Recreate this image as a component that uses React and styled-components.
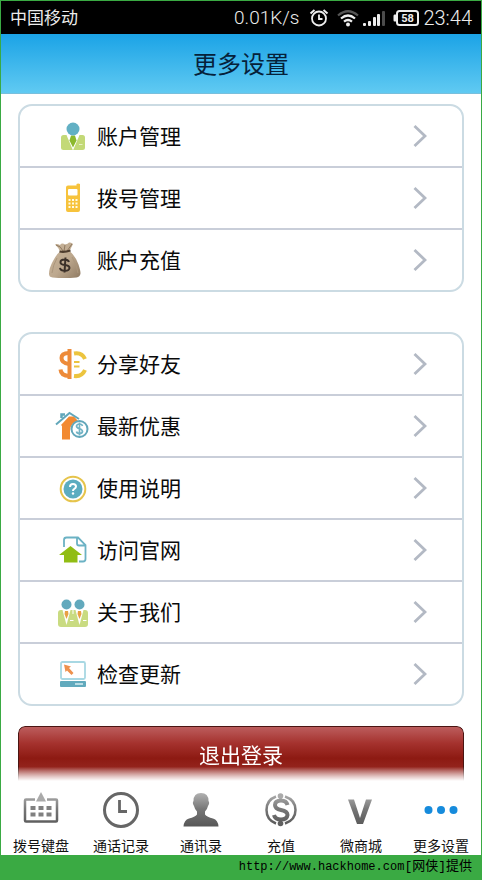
import React from 'react';
import styled, { createGlobalStyle, ThemeProvider } from 'styled-components';

const theme = {
    frame: '#3aaa43',
    line: '#c9ced9',
    edge: '#cbdbe3',
    text: '#0a0a0a',
};

const GlobalStyle = createGlobalStyle`
    * {
        box-sizing: border-box;
    }
    body {
        margin: 0;
        background: #fff;
        font-family: Roboto, 'Noto Sans CJK SC', sans-serif;
    }
`;

const Page = styled.div`
    display: flex;
    flex-direction: column;
    min-height: 100vh;
    background: #fff;
    border: 1px solid ${({ theme }) => theme.frame};
    border-bottom: 0;
`;

const StatusBar = styled.div`
    display: flex;
    align-items: center;
    justify-content: space-between;
    height: 33px;
    padding: 0 9px;
    background: #000;
    color: #ececec;
    font-size: 17px;
    line-height: 24px;
`;

const StatusInfo = styled.div`
    display: flex;
    align-items: center;
    font-weight: 300;
    svg {
        display: block;
    }
`;

const Speed = styled.span`
    margin-right: 10px;
    font-size: 19px;
`;

const Clock = styled.span`
    font-size: 20px;
`;

const StatusIcons = styled.div`
    display: flex;
    align-items: center;
    gap: 8px;
    margin-right: 4px;
`;

const Signals = styled.div`
    display: flex;
    align-items: center;
    gap: 4px;
`;

const Header = styled.header`
    display: flex;
    align-items: center;
    justify-content: center;
    height: 60px;
    padding-top: 2px;
    background: linear-gradient(#1ba3e6, #60caf2);
    border-bottom: 1px solid #79bfdc;
`;

const Title = styled.h1`
    margin: 0;
    font-size: 24px;
    line-height: 32px;
    font-weight: 400;
    color: #06213a;
`;

const Content = styled.main`
    flex: 1;
    display: flex;
    flex-direction: column;
    padding: 10px 17px 0;
`;

const Card = styled.ul`
    margin: 0 0 ${({ $last }) => ($last ? '20px' : '40px')};
    padding: 0;
    list-style: none;
    border: 2px solid ${({ theme }) => theme.edge};
    border-radius: 14px;
`;

const Item = styled.li`
    & + & {
        border-top: 2px solid ${({ theme }) => theme.line};
    }
`;

const Row = styled.a`
    display: flex;
    align-items: center;
    height: 60px;
    padding-right: 35px;
    color: ${({ theme }) => theme.text};
    text-decoration: none;
    font-size: 21px;
    line-height: 30px;
`;

const IconSlot = styled.span`
    display: flex;
    justify-content: flex-end;
    width: 69px;
    margin-right: 8px;
    padding-right: ${({ $wide }) => ($wide ? '7px' : '0')};
`;

const RowLabel = styled.span`
    flex: 1;
    padding-top: 2px;
`;

const Logout = styled.button`
    height: 55px;
    border: 1px solid #4a1512;
    border-bottom: 0;
    border-radius: 7px 7px 0 0;
    background: linear-gradient(#bc5d5d, #a5322e 30%, #8d1a12 58%, #93231c 74%, #b05a55);
    mask-image: linear-gradient(#000 74%, transparent);
    padding: 4px 0 0;
    color: #fff;
    font-family: inherit;
    font-size: 21px;
    line-height: 30px;
    cursor: pointer;
`;

const TabBar = styled.nav`
    display: grid;
    grid-template-columns: repeat(6, 1fr);
    height: 74px;
`;

const Tab = styled.a`
    display: flex;
    flex-direction: column;
    align-items: center;
    gap: 6px;
    padding-top: 9px;
    color: #111;
    text-decoration: none;
    font-size: 14px;
    line-height: 20px;
    white-space: nowrap;
`;

const Footer = styled.footer`
    display: flex;
    align-items: center;
    justify-content: flex-end;
    height: 25px;
    margin: 0 -1px;
    padding: 0 10px 2px;
    background: ${({ theme }) => theme.frame};
    color: #000;
    font-family: 'Liberation Mono', 'Noto Sans CJK SC', monospace;
    font-size: 12px;
    line-height: 20px;
`;

const Source = styled.span`
    font-size: 13px;
`;

const AlarmIcon = () => (
    <svg width="20" height="20" viewBox="0 0 20 20" fill="none" stroke="#eee" strokeWidth="1.8">
        <circle cx="10" cy="10.5" r="7" />
        <path d="M10 6.5v4.5h3.5" />
        <path d="M1.5 5.5 5.5 2M18.5 5.5 14.5 2" strokeWidth="2" />
    </svg>
);

const WifiIcon = () => (
    <svg width="22" height="18" viewBox="0 0 22 18" fill="none" strokeWidth="2.2">
        <path d="M1 6.5Q11-2 21 6.5" stroke="#555" />
        <path d="M4 9.5Q11 3.5 18 9.5" stroke="#eee" />
        <path d="M7 12.7Q11 9.3 15 12.7" stroke="#eee" />
        <circle cx="11" cy="15.5" r="2" fill="#eee" />
    </svg>
);

const SignalIcon = () => (
    <svg width="22" height="18" viewBox="0 0 22 18" fill="#eee">
        <rect x="0" y="14" width="3" height="3" rx="1" />
        <rect x="5" y="12" width="3" height="5" rx="1" />
        <rect x="10" y="8" width="3" height="9" rx="1" />
        <rect x="14" y="5" width="3" height="12" rx="1" />
        <rect x="19" y="2" width="3" height="15" rx="1" fill="#4b4b4b" />
    </svg>
);

const BatteryIcon = () => (
    <svg width="26" height="16" viewBox="0 0 26 16">
        <rect x="4" y="1" width="21" height="14" rx="2.5" fill="none" stroke="#eee" strokeWidth="2" />
        <path d="M3 4.5H1.5Q.5 4.5.5 6v4q0 1.5 1 1.5H3z" fill="#eee" />
        <text x="14.5" y="12" textAnchor="middle" fontFamily="Roboto" fontSize="11" fontWeight="700" fill="#eee">58</text>
    </svg>
);

const AccountIcon = () => (
    <svg width="32" height="32" viewBox="0 0 32 32">
        <rect x="4" y="15" width="24" height="15" rx="2.5" fill="#c3d977" />
        <path d="M9.5 15h13L16 30.5z" fill="#fff" />
        <path d="M14 15.5h4l1.5 5-3.5 7-3.5-7z" fill="#8cb92c" />
        <circle cx="16" cy="9" r="6.5" fill="#62b0c4" />
        <path d="M22 24.5h3.5" stroke="#e8f1c6" />
    </svg>
);

const PhoneIcon = () => (
    <svg width="32" height="32" viewBox="0 0 32 32">
        <path d="M11 3.5h8.500V2q1.5-1.2 3.5 0v26q0 2-2 2H11q-2 0-2-2V5.500q0-2 2-2z" fill="#f7c33c" />
        <rect x="11" y="7" width="9.500" height="6.5" rx="1" fill="#fff" />
        {[17, 20.5, 24].map(y =>
            [11.5, 15, 18.5].map(x => <rect key={`${x}-${y}`} x={x} y={y} width="2" height="2" fill="#fffbe6" />)
        )}
    </svg>
);

const MoneyBagIcon = () => (
    <svg width="34" height="38" viewBox="0 0 34 38">
        <defs>
            <linearGradient id="bag" x1="0" x2="1" y1="0" y2="1">
                <stop offset="0" stopColor="#c9b59b" />
                <stop offset=".55" stopColor="#bda88e" />
                <stop offset="1" stopColor="#8f7a62" />
            </linearGradient>
        </defs>
        <path d="M7 3.5q2-1 5 .5 2-2.5 5-.5 3-.5 4-2 2.500-.5 4 1.500l-3.500 7q6 5 9 13.500 2 6 2 9-.5 3.500-4 4-12 1-24 0Q1 36 1 33q0-6 4-13 3-6 7-9.500-1-3.500-5-7z" fill="url(#bag)" />
        <path d="M8 4q5 1 7 6M17 4l-1 6M24 3l-5 7" fill="none" stroke="#8e785f" />
        <path d="M9 17q-4 7-5 15M24 16q5 8 6 16" fill="none" stroke="#ab967c" />
        <path d="M11.5 10.500q5 1 11-1" fill="none" stroke="#4d3c2d" strokeWidth="2.2" />
        <path d="M21 21q-1-2.500-4.500-2.500-4 0-4 2.700 0 2.300 4.300 2.800 4.700.5 4.700 3-.3 2.800-4.500 2.800-4.500 0-5-3M17.500 16.500l-1 15" fill="none" stroke="#3b3029" strokeWidth="2" />
    </svg>
);

const ShareIcon = () => (
    <svg width="32" height="32" viewBox="0 0 32 32" fill="none" strokeWidth="4">
        <path d="M12 5Q4.500 5 4.500 10T12 16M3.500 21.500q.5 6.500 9 6.500" stroke="#ed8b3a" />
        <path d="M12.500 1v30" stroke="#ed8b3a" strokeWidth="4" />
        <path d="M17 5.500q8-1.500 11 5.500M17 28q8 1 11-6" stroke="#ecc43e" />
        <path d="M17 14h5.500M17 18.500h5.500" stroke="#ecc43e" strokeWidth="1.800" />
    </svg>
);

const OfferIcon = () => (
    <svg width="34" height="32" viewBox="0 0 34 32" fill="none">
        <path d="M6 15l8-8.500h5l4 4.500q-8 2-8 9.500v9H7V16z" fill="#f28a32" />
        <path d="M1 14.500 14.500 3 24 9" stroke="#62a7ba" strokeWidth="2" />
        <path d="M6.500 8V4.500h3.500" stroke="#62a7ba" strokeWidth="2.500" />
        <circle cx="24.500" cy="19" r="8" fill="#fff" stroke="#62a7ba" strokeWidth="2" />
        <path d="M27.500 16q-.5-2-3-2t-3 2q0 1.800 3 2.700 3 .8 3 2.800-.3 2-3 2t-3-2M24.500 12.500v13" stroke="#73b4c5" strokeWidth="1.700" />
    </svg>
);

const HelpIcon = () => (
    <svg width="32" height="32" viewBox="0 0 32 32">
        <circle cx="16" cy="17" r="12.3" fill="#fff" stroke="#e6c44b" strokeWidth="2" />
        <circle cx="16" cy="17" r="9.500" fill="#5cacc0" />
        <path d="M13 15q0-3 3-3t3 2.500q0 1.500-1.700 2.400Q16 17.500 16 19" fill="none" stroke="#fff" strokeWidth="2" />
        <circle cx="16" cy="21.500" r="1.200" fill="#fff" />
    </svg>
);

const SiteIcon = () => (
    <svg width="32" height="32" viewBox="0 0 32 32" fill="none">
        <path d="M7 13V6q0-2.500 2.500-2.500H21L28.500 11v14q0 2.500-2.500 2.500h-4M20 4v5.500q0 2 2 2h6" stroke="#6bb2c4" strokeWidth="1.800" />
        <path d="M13.500 12 25 21h-4.500v7.500H7V21H2z" fill="#91bd14" />
    </svg>
);

const AboutIcon = () => (
    <svg width="32" height="32" viewBox="0 0 32 32">
        <rect x="1" y="14" width="30" height="17" rx="3" fill="#c9db81" />
        {[9.5, 22.5].map(x => (
            <g key={x}>
                <circle cx={x} cy="8.500" r="5" fill="#62a9bd" />
                <path d={`M${x - 4} 14h8l-4 15z`} fill="#fff" />
                <path d={`M${x - 1.5} 15h3l.5 3-2 5-2-5z`} fill="#e8a044" />
                <path d={`M${x + 3.5} 24.500h3.500`} stroke="#fff" />
            </g>
        ))}
        <path d="M16 14v4" stroke="#fff" />
    </svg>
);

const UpdateIcon = () => (
    <svg width="32" height="32" viewBox="0 0 32 32">
        <rect x="4" y="4" width="24" height="17" rx="1.500" fill="#fff" stroke="#a8d8e3" strokeWidth="1.800" />
        <path d="M7 6.500l7 2-2 1.500 4.500 5-2 2-4.500-4.500L8.500 14z" fill="#ee914d" />
        <rect x="3" y="23" width="26" height="6" rx="1" fill="#62aabd" />
        <path d="M18 26h8" stroke="#d8eef3" strokeWidth="1.500" />
    </svg>
);

const Chevron = () => (
    <svg width="14" height="24" viewBox="0 0 14 24" fill="none" stroke="#b3b9c4" strokeWidth="2.800">
        <path d="M1.500 2 12 12 1.500 22" />
    </svg>
);

const GrayFade = ({ id }) => (
    <defs>
        <linearGradient id={id} gradientUnits="userSpaceOnUse" x1="0" x2="0" y1="2" y2="36">
            <stop offset="0" stopColor="#b5b5b5" />
            <stop offset=".5" stopColor="#777" />
            <stop offset="1" stopColor="#585858" />
        </linearGradient>
    </defs>
);

const KeypadIcon = () => (
    <svg width="38" height="40" viewBox="0 0 38 40">
        <GrayFade id="keypad" />
        <path d="M13 9.500H4q-1 0-1 1v20q0 1 1 1h30q1 0 1-1v-20q0-1-1-1h-9" fill="none" stroke="url(#keypad)" strokeWidth="2.500" />
        <path d="M19 2l5 9.500H14z" fill="#aaa" />
        {[16, 22.5].map(y =>
            [8.5, 16.5, 24.5].map(x => <rect key={`${x}-${y}`} x={x} y={y} width="5" height="4" fill="#808080" />)
        )}
    </svg>
);

const HistoryIcon = () => (
    <svg width="38" height="40" viewBox="0 0 38 40" fill="none" stroke="#666">
        <circle cx="19" cy="20" r="16.500" strokeWidth="3" />
        <path d="M17.500 10v11.500H25" strokeWidth="2.800" />
    </svg>
);

const ContactsIcon = () => (
    <svg width="38" height="40" viewBox="0 0 38 40">
        <GrayFade id="contacts" />
        <path d="M19 3q7.500 0 7.500 8 1.500 2-.5 5-1 4-3 5.500v3q2 2.500 8 4 5 1.500 5.500 8h-35q.5-6.500 5.500-8 6-1.500 8-4v-3q-2-1.500-3-5.500-2-3-.5-5 0-8 7.500-8z" fill="url(#contacts)" />
    </svg>
);

const RechargeIcon = () => (
    <svg width="38" height="40" viewBox="0 0 38 40" fill="none">
        <GrayFade id="coin" />
        <path d="M14 6.500Q4.500 10 4.500 20T14 33.500M23 6.500q10.500 3.500 10.500 13.500T23 33.500" stroke="url(#coin)" strokeWidth="2.500" />
        <path d="M25.500 15q-1-4.500-6.500-4.500-6 0-6 4.500 0 3.800 6 5 6.500 1.200 6.500 5-.5 4.500-6.500 4.500T12 25" stroke="url(#coin)" strokeWidth="4" />
        <path d="M18.500 5v6M18.500 29v5" stroke="url(#coin)" strokeWidth="2.500" />
        <circle cx="18.500" cy="6" r="2.800" fill="#aaa" />
        <circle cx="18.500" cy="33.500" r="2.800" fill="#606060" />
    </svg>
);

const ShopIcon = () => (
    <svg width="38" height="40" viewBox="0 0 38 40">
        <GrayFade id="shop" />
        <path d="M6 9.500h6l6 18.500 6-18.500h6L21 34h-6z" fill="url(#shop)" />
    </svg>
);

const MoreIcon = () => (
    <svg width="38" height="40" viewBox="0 0 38 40" fill="#168bdc">
        <circle cx="6.500" cy="20" r="4" />
        <circle cx="19" cy="20" r="4" />
        <circle cx="31.500" cy="20" r="4" />
    </svg>
);

const accountItems = [
    { label: '账户管理', Icon: AccountIcon },
    { label: '拨号管理', Icon: PhoneIcon },
    { label: '账户充值', Icon: MoneyBagIcon, wide: true },
];

const moreItems = [
    { label: '分享好友', Icon: ShareIcon },
    { label: '最新优惠', Icon: OfferIcon },
    { label: '使用说明', Icon: HelpIcon },
    { label: '访问官网', Icon: SiteIcon },
    { label: '关于我们', Icon: AboutIcon },
    { label: '检查更新', Icon: UpdateIcon },
];

const tabs = [
    { label: '拨号键盘', Icon: KeypadIcon },
    { label: '通话记录', Icon: HistoryIcon },
    { label: '通讯录', Icon: ContactsIcon },
    { label: '充值', Icon: RechargeIcon },
    { label: '微商城', Icon: ShopIcon },
    { label: '更多设置', Icon: MoreIcon },
];

function SettingList({ items, last }) {
    return (
        <Card $last={last}>
            {items.map(({ label, Icon, wide }) => (
                <Item key={label}>
                    <Row href="#">
                        <IconSlot $wide={wide}>
                            <Icon />
                        </IconSlot>
                        <RowLabel>{label}</RowLabel>
                        <Chevron />
                    </Row>
                </Item>
            ))}
        </Card>
    );
}

function App() {
    return (
        <ThemeProvider theme={theme}>
            <GlobalStyle />
            <Page>
                <StatusBar>
                    <span>中国移动</span>
                    <StatusInfo>
                        <Speed>0.01K/s</Speed>
                        <StatusIcons>
                            <AlarmIcon />
                            <Signals>
                                <WifiIcon />
                                <SignalIcon />
                            </Signals>
                            <BatteryIcon />
                        </StatusIcons>
                        <Clock>23:44</Clock>
                    </StatusInfo>
                </StatusBar>
                <Header>
                    <Title>更多设置</Title>
                </Header>
                <Content>
                    <SettingList items={accountItems} />
                    <SettingList items={moreItems} last />
                    <Logout type="button">退出登录</Logout>
                </Content>
                <TabBar>
                    {tabs.map(({ label, Icon }) => (
                        <Tab key={label} href="#">
                            <Icon />
                            <span>{label}</span>
                        </Tab>
                    ))}
                </TabBar>
                <Footer>
                    <span>http://www.hackhome.com</span>
                    <Source>[网侠]提供</Source>
                </Footer>
            </Page>
        </ThemeProvider>
    );
}

export default App;
